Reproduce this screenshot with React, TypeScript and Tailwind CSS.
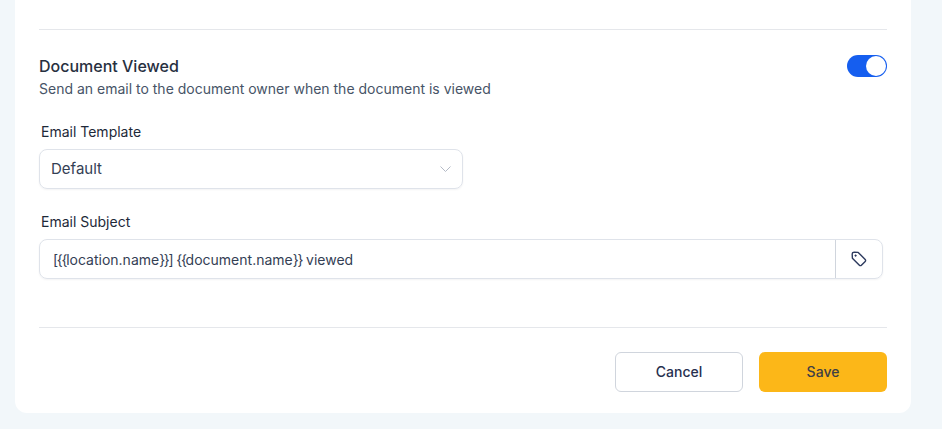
import React from "react";

function Braces({ children }: { children: string }) {
  return <span className="tracking-[-1.3px]">{children}</span>;
}

export default function App() {
  return (
    <div className="h-[429px] w-[942px] overflow-hidden bg-[#f2f7fa] pl-[15px] pr-[31px] font-['Inter',sans-serif]">
      <div className="h-[413px] rounded-b-xl bg-white px-6 pt-[29px]">
        <div className="border-t border-[#e5e7eb] pt-[26px]">
          <div className="flex items-start justify-between">
            <div>
              <div className="text-base leading-5 font-medium text-[#27303f]">Document Viewed</div>
              <div className="text-sm leading-[26px] text-[#475467]">Send an email to the document owner when the document is viewed</div>
            </div>
            <div className="-mt-px flex h-[22px] w-10 items-center justify-end rounded-full bg-[#155eef] p-px">
              <div className="h-5 w-5 rounded-full bg-white" />
            </div>
          </div>
          <div className="mt-5 pl-0.5 text-sm leading-[20px] text-[#1d2939]">Email Template</div>
          <div className="mt-[7px] flex h-10 w-[424px] items-center justify-between rounded-lg border border-[#dfe3ea] pr-[11px] pl-[11px] text-[15px] text-[#344054] shadow-[0_1px_2px_rgba(16,24,40,0.05)]">
            Default
            <svg width="11" height="8" viewBox="0 0 11 8" fill="none" stroke="#b4bac6" strokeWidth="1">
              <path d="M0.5 1.5 5.5 6.5 10.5 1.5" />
            </svg>
          </div>
          <div className="mt-[23px] pl-0.5 text-sm leading-[20px] text-[#1d2939]">Email Subject</div>
          <div className="mt-[7px] flex h-10 w-[844px] rounded-lg border border-[#dfe3ea] shadow-[0_1px_2px_rgba(16,24,40,0.05)]">
            <div className="flex-1 pl-[13px] text-sm leading-[39px] text-[#344054]">
              <Braces>{"[{{"}</Braces>location.name<Braces>{"}}]"}</Braces> <Braces>{"{{"}</Braces>document.name<Braces>{"}}"}</Braces> viewed
            </div>
            <div className="flex w-[47px] items-center justify-center border-l border-[#d0d5dd]">
              <svg width="16" height="16" viewBox="0 0 16 16" fill="none" stroke="#2d3a5e" strokeWidth="1.4" strokeLinejoin="round">
                <path d="M1.2 3.2 1.6 1.6 3.2 1.2 7.2 1.4 14.2 8.4a1.4 1.4 0 0 1 0 2l-3.8 3.8a1.4 1.4 0 0 1-2 0L1.4 7.2Z" />
                <circle cx="4.6" cy="4.6" r="0.8" fill="#2d3a5e" strokeWidth="0.6" />
              </svg>
            </div>
          </div>
          <div className="mt-[48px] flex justify-end gap-4 border-t border-[#e5e7eb] pt-6">
            <div className="flex h-10 w-32 items-center justify-center rounded-md border border-[#d0d5dd] text-sm font-medium text-[#27304f]">Cancel</div>
            <div className="flex h-10 w-32 items-center justify-center rounded-md bg-[#fcb718] text-sm font-medium text-[#3f3f46]">Save</div>
          </div>
        </div>
      </div>
    </div>
  );
}
